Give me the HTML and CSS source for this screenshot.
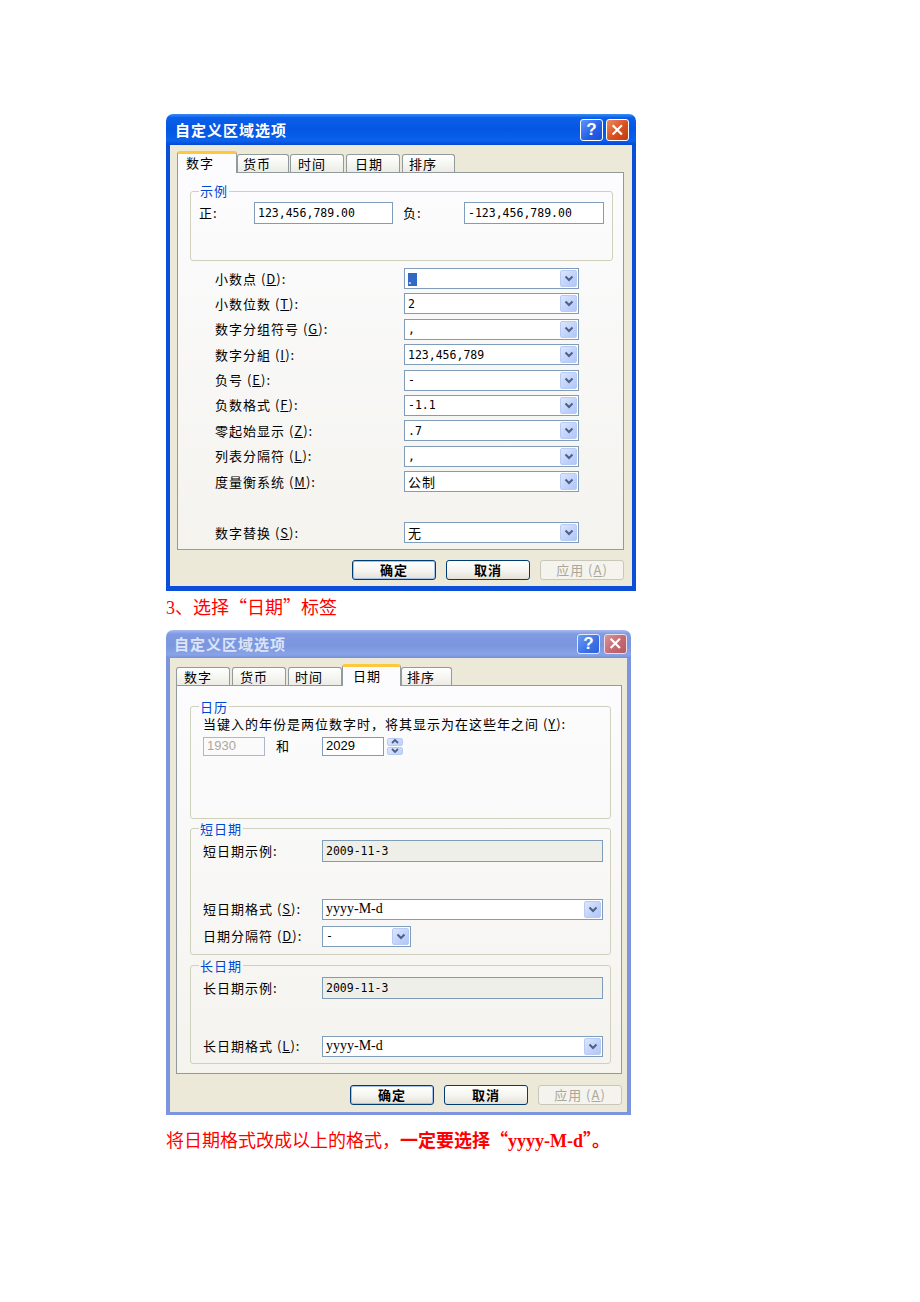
FILE: index.html
```html
<!DOCTYPE html>
<html lang="zh-CN">
<head>
<meta charset="utf-8">
<title>自定义区域选项</title>
<link rel="stylesheet" href="styles.css">
</head>
<body>
<div class="page">

  <section class="dlg dlg1">
    <header class="title">
      <span class="title-text">自定义区域选项</span>
      <div class="tbtns">
        <span class="tb help">?</span>
        <span class="tb close"><svg viewBox="0 0 23 21" width="23" height="21"><path d="M7 5.5 L15.5 14 M15.5 5.5 L7 14" stroke="#fff" stroke-width="2.4" stroke-linecap="square" fill="none"/></svg></span>
      </div>
    </header>
    <div class="dbody">
      <div class="tabs">
        <span class="tab active w60 pl8">数字</span>
        <span class="tab w52 pl5">货币</span>
        <span class="tab w54 ml1 pl7">时间</span>
        <span class="tab w54 ml2 pl8">日期</span>
        <span class="tab w53 ml2 pl6">排序</span>
      </div>
      <div class="panel p1">
        <fieldset class="group g-sample">
          <legend>示例</legend>
          <div class="sample">
            <span class="slbl w55">正:</span>
            <span class="field w139 num">123,456,789.00</span>
            <span class="slbl w61 ml10">负:</span>
            <span class="field w140 num">-123,456,789.00</span>
          </div>
        </fieldset>
        <div class="rows">
          <div class="row"><span class="lbl">小数点 (<u>D</u>):</span><div class="combo"><span class="val"><span class="sel">.</span></span><span class="dd"><svg viewBox="0 0 10 7" width="10" height="7"><path d="M1.5 1.5 L5 5 L8.5 1.5" stroke="#4D6185" stroke-width="2" fill="none"/></svg></span></div></div>
          <div class="row"><span class="lbl">小数位数 (<u>T</u>):</span><div class="combo"><span class="val num">2</span><span class="dd"><svg viewBox="0 0 10 7" width="10" height="7"><path d="M1.5 1.5 L5 5 L8.5 1.5" stroke="#4D6185" stroke-width="2" fill="none"/></svg></span></div></div>
          <div class="row"><span class="lbl">数字分组符号 (<u>G</u>):</span><div class="combo"><span class="val num">,</span><span class="dd"><svg viewBox="0 0 10 7" width="10" height="7"><path d="M1.5 1.5 L5 5 L8.5 1.5" stroke="#4D6185" stroke-width="2" fill="none"/></svg></span></div></div>
          <div class="row"><span class="lbl">数字分組 (<u>I</u>):</span><div class="combo"><span class="val num">123,456,789</span><span class="dd"><svg viewBox="0 0 10 7" width="10" height="7"><path d="M1.5 1.5 L5 5 L8.5 1.5" stroke="#4D6185" stroke-width="2" fill="none"/></svg></span></div></div>
          <div class="row"><span class="lbl">负号 (<u>E</u>):</span><div class="combo"><span class="val num">-</span><span class="dd"><svg viewBox="0 0 10 7" width="10" height="7"><path d="M1.5 1.5 L5 5 L8.5 1.5" stroke="#4D6185" stroke-width="2" fill="none"/></svg></span></div></div>
          <div class="row"><span class="lbl">负数格式 (<u>F</u>):</span><div class="combo"><span class="val num">-1.1</span><span class="dd"><svg viewBox="0 0 10 7" width="10" height="7"><path d="M1.5 1.5 L5 5 L8.5 1.5" stroke="#4D6185" stroke-width="2" fill="none"/></svg></span></div></div>
          <div class="row"><span class="lbl">零起始显示 (<u>Z</u>):</span><div class="combo"><span class="val num">.7</span><span class="dd"><svg viewBox="0 0 10 7" width="10" height="7"><path d="M1.5 1.5 L5 5 L8.5 1.5" stroke="#4D6185" stroke-width="2" fill="none"/></svg></span></div></div>
          <div class="row"><span class="lbl">列表分隔符 (<u>L</u>):</span><div class="combo"><span class="val num">,</span><span class="dd"><svg viewBox="0 0 10 7" width="10" height="7"><path d="M1.5 1.5 L5 5 L8.5 1.5" stroke="#4D6185" stroke-width="2" fill="none"/></svg></span></div></div>
          <div class="row"><span class="lbl">度量衡系统 (<u>M</u>):</span><div class="combo"><span class="val">公制</span><span class="dd"><svg viewBox="0 0 10 7" width="10" height="7"><path d="M1.5 1.5 L5 5 L8.5 1.5" stroke="#4D6185" stroke-width="2" fill="none"/></svg></span></div></div>
          <div class="row row-gap"><span class="lbl">数字替换 (<u>S</u>):</span><div class="combo"><span class="val">无</span><span class="dd"><svg viewBox="0 0 10 7" width="10" height="7"><path d="M1.5 1.5 L5 5 L8.5 1.5" stroke="#4D6185" stroke-width="2" fill="none"/></svg></span></div></div>
        </div>
      </div>
      <div class="btns">
        <span class="btn default">确定</span>
        <span class="btn">取消</span>
        <span class="btn disabled">应用 (<u>A</u>)</span>
      </div>
    </div>
  </section>

  <p class="note note1"><span class="latin">3</span>、选择“日期”标签</p>

  <section class="dlg dlg2">
    <header class="title">
      <span class="title-text">自定义区域选项</span>
      <div class="tbtns">
        <span class="tb help">?</span>
        <span class="tb close"><svg viewBox="0 0 23 20" width="23" height="20"><path d="M7 5 L15.5 13.5 M15.5 5 L7 13.5" stroke="#fff" stroke-width="2.4" stroke-linecap="square" fill="none"/></svg></span>
      </div>
    </header>
    <div class="dbody">
      <div class="tabs">
        <span class="tab w54 pl7">数字</span>
        <span class="tab w54 ml2 pl7">货币</span>
        <span class="tab w54 ml2 pl6">时间</span>
        <span class="tab active w59 pl10">日期</span>
        <span class="tab w51 pl5">排序</span>
      </div>
      <div class="panel p2">
        <fieldset class="group g-cal">
          <legend>日历</legend>
          <div class="gcontent">
            <div class="line">当键入的年份是两位数字时，将其显示为在这些年之间 (<u>Y</u>):</div>
            <div class="yearrow">
              <span class="field yf disabled">1930</span>
              <span class="and">和</span>
              <span class="field yf">2029</span>
              <span class="spin">
                <span class="sb"><svg viewBox="0 0 8 5" width="8" height="5"><path d="M1 4 L4 1 L7 4" stroke="#4D6185" stroke-width="1.8" fill="none"/></svg></span>
                <span class="sb"><svg viewBox="0 0 8 5" width="8" height="5"><path d="M1 1 L4 4 L7 1" stroke="#4D6185" stroke-width="1.8" fill="none"/></svg></span>
              </span>
            </div>
          </div>
        </fieldset>
        <fieldset class="group g-short">
          <legend>短日期</legend>
          <div class="gcontent">
            <div class="drow"><span class="dlbl">短日期示例:</span><span class="field ro num grow">2009-11-3</span></div>
            <div class="drow gap37"><span class="dlbl">短日期格式 (<u>S</u>):</span><div class="combo grow"><span class="val serif">yyyy-M-d</span><span class="dd"><svg viewBox="0 0 10 7" width="10" height="7"><path d="M1.5 1.5 L5 5 L8.5 1.5" stroke="#4D6185" stroke-width="2" fill="none"/></svg></span></div></div>
            <div class="drow gap6"><span class="dlbl">日期分隔符 (<u>D</u>):</span><div class="combo small"><span class="val num">-</span><span class="dd"><svg viewBox="0 0 10 7" width="10" height="7"><path d="M1.5 1.5 L5 5 L8.5 1.5" stroke="#4D6185" stroke-width="2" fill="none"/></svg></span></div></div>
          </div>
        </fieldset>
        <fieldset class="group g-long">
          <legend>长日期</legend>
          <div class="gcontent">
            <div class="drow"><span class="dlbl">长日期示例:</span><span class="field ro num grow">2009-11-3</span></div>
            <div class="drow gap37"><span class="dlbl">长日期格式 (<u>L</u>):</span><div class="combo grow"><span class="val serif">yyyy-M-d</span><span class="dd"><svg viewBox="0 0 10 7" width="10" height="7"><path d="M1.5 1.5 L5 5 L8.5 1.5" stroke="#4D6185" stroke-width="2" fill="none"/></svg></span></div></div>
          </div>
        </fieldset>
      </div>
      <div class="btns">
        <span class="btn default">确定</span>
        <span class="btn">取消</span>
        <span class="btn disabled">应用 (<u>A</u>)</span>
      </div>
    </div>
  </section>

  <p class="note note2">将日期格式改成以上的格式，<b>一定要选择“<span class="latin">yyyy-M-d</span>”。</b></p>

</div>
</body>
</html>
```

FILE: styles.css
```css
* { box-sizing: border-box; }

body {
  margin: 0;
  background: #ffffff;
  font-family: "Noto Sans CJK SC", sans-serif;
}

.page {
  padding: 114px 0 0 166px;
}

/* ---------- dialog frame ---------- */
.dlg {
  display: flex;
  flex-direction: column;
  font-size: 13px;
  line-height: 16px;
  letter-spacing: 1px;
  color: #000;
}
.dlg1 { width: 470px; }
.dlg2 { width: 465px; }

.title {
  display: flex;
  align-items: center;
  justify-content: space-between;
  border-radius: 7px 7px 0 0;
}
.dlg1 .title {
  height: 31px;
  padding: 1px 7px 0 9px;
  background: linear-gradient(#3D8BF7 0%, #0A5FE8 12%, #0556E3 50%, #0A62EC 86%, #0646D2 100%);
}
.dlg2 .title {
  height: 28px;
  padding: 0 4px 0 8px;
  background: linear-gradient(#A9BCF0 0%, #809BE2 14%, #7B96DF 55%, #89A3E6 88%, #7590DA 100%);
}
.title-text {
  font-size: 15px;
  font-weight: bold;
  letter-spacing: 1px;
}
.dlg1 .title-text { color: #ffffff; }
.dlg2 .title-text { color: #DCE4F8; }

.tbtns {
  display: flex;
  align-items: center;
}
.dlg1 .tbtns { gap: 3px; }
.dlg2 .tbtns { gap: 4px; }

.tb {
  display: flex;
  align-items: center;
  justify-content: center;
  width: 23px;
  border: 1px solid #ffffff;
  border-radius: 3px;
  color: #fff;
  font-family: "Liberation Sans", sans-serif;
  font-weight: bold;
  font-size: 17px;
  letter-spacing: 0;
}
.dlg1 .tb { height: 22px; }
.dlg2 .tb { height: 20px; }
.dlg1 .help { background: linear-gradient(135deg, #5D95FA, #245EE6 60%, #1A4ED8); }
.dlg1 .close { background: linear-gradient(135deg, #EE8A63, #D9501F 55%, #C2380E); }
.dlg2 .help { background: linear-gradient(135deg, #6C9BF4, #3C72E6 60%, #2F60D8); border-color: #E2E9FA; }
.dlg2 .close { background: linear-gradient(135deg, #D7949A, #C46A72 55%, #B35A62); border-color: #EBDDE2; }
.tb svg { display: block; }

.dbody {
  display: flex;
  flex-direction: column;
  background: #ECE9D8;
  border-style: solid;
}
.dlg1 .dbody {
  border-width: 0 4px 5px;
  border-color: #0B4FD9;
  padding: 6px 8px 6px 7px;
}
.dlg2 .dbody {
  border-width: 0 4px 3px;
  border-color: #7C95DE;
  padding: 6px 5px 7px 6px;
}

/* ---------- tabs ---------- */
.tabs {
  display: flex;
  align-items: flex-end;
  height: 21px;
}
.tab {
  height: 18px;
  border: 1px solid #919B9C;
  border-bottom: none;
  border-radius: 3px 3px 0 0;
  background: linear-gradient(#FFFFFF, #F4F4F0 60%, #ECEBE5);
  line-height: 17px;
  white-space: nowrap;
}
.tab.active {
  height: 22px;
  margin-bottom: -1px;
  position: relative;
  border-top: 3px solid #FFC83C;
  background: #FCFCFE;
  line-height: 18px;
}
.w51 { width: 51px; }
.w52 { width: 52px; }
.w53 { width: 53px; }
.w54 { width: 54px; }
.w59 { width: 59px; }
.w60 { width: 60px; }
.ml1 { margin-left: 1px; }
.ml2 { margin-left: 2px; }
.pl5 { padding-left: 5px; }
.pl6 { padding-left: 6px; }
.pl7 { padding-left: 7px; }
.pl8 { padding-left: 8px; }
.pl10 { padding-left: 10px; }

/* ---------- panel ---------- */
.panel {
  display: flex;
  flex-direction: column;
  border: 1px solid #919B9C;
  background: linear-gradient(#FCFCFE, #F4F3EE);
}
.p1 { padding-bottom: 5.7px; }
.p2 { padding-bottom: 9px; }

.group {
  margin: 0;
  padding: 0;
  min-width: 0;
  border: 1px solid #D0D0BF;
  border-radius: 3px;
}
.group legend {
  color: #0046D5;
  line-height: 14px;
  padding: 0 1px;
  white-space: nowrap;
}
.g-sample { margin: 11px 10px 0 12px; }
.g-sample legend { margin-left: 8px; }
.g-cal { margin: 14px 10px 0 13px; }
.g-short { margin: 3px 10px 0 13px; }
.g-long { margin: 4px 10px 0 13px; }
.g-cal legend, .g-short legend, .g-long legend { margin-left: 8px; }

/* sample row */
.sample {
  display: flex;
  align-items: center;
  padding: 4px 0 36px 8px;
}
.slbl { flex: none; }
.w55 { width: 55px; }
.w61 { width: 61px; }
.ml10 { margin-left: 10px; }
.w139 { width: 139px; }
.w140 { width: 140px; }

.field {
  flex: none;
  display: flex;
  align-items: center;
  height: 22px;
  padding-left: 3px;
  border: 1px solid #7F9DB9;
  background: #ffffff;
  white-space: nowrap;
}
.num {
  font-family: "DejaVu Sans Mono", monospace;
  font-size: 11.5px;
  letter-spacing: 0;
}
.serif {
  font-family: "Liberation Serif", serif;
  font-size: 14px;
  letter-spacing: 0;
}

/* rows of combos */
.rows {
  display: flex;
  flex-direction: column;
  gap: 4.4px;
  margin-top: 7px;
  padding-left: 37px;
}
.row {
  display: flex;
  align-items: center;
  height: 21px;
}
.row-gap { margin-top: 25.7px; }
.lbl {
  flex: none;
  width: 189px;
  white-space: nowrap;
}

.combo {
  flex: none;
  display: flex;
  align-items: center;
  width: 175px;
  height: 21px;
  border: 1px solid #7F9DB9;
  background: #ffffff;
}
.combo .val {
  flex: 1;
  padding-left: 3px;
  white-space: nowrap;
}
.sel {
  display: inline-block;
  width: 9px;
  height: 13px;
  line-height: 12px;
  background: #316AC5;
  color: #fff;
  vertical-align: middle;
}
.dd {
  flex: none;
  display: flex;
  align-items: center;
  justify-content: center;
  width: 17px;
  align-self: stretch;
  margin: 1px;
  border: 1px solid #B9CBF5;
  border-radius: 2px;
  background: linear-gradient(135deg, #DCE6FD, #C2D3FB 55%, #B2C7F8);
}
.dd svg { display: block; }

/* dialog 2 groups */
.gcontent {
  display: flex;
  flex-direction: column;
}
.g-cal .gcontent { padding: 2px 0 62px 12px; }
.g-short .gcontent { padding: 4px 7px 7px 12px; }
.g-long .gcontent { padding: 4px 7px 6px 12px; }

.line { white-space: nowrap; }
.yearrow {
  display: flex;
  align-items: center;
  margin-top: 5px;
}
.yf {
  width: 62px;
  height: 19px;
  font-family: "Liberation Sans", sans-serif;
  font-size: 13px;
  letter-spacing: 0;
}
.yf.disabled {
  color: #ACA899;
  border-color: #A9B8CA;
  background: transparent;
}
.and {
  width: 46px;
  margin-left: 11px;
}
.spin {
  display: flex;
  flex-direction: column;
  gap: 1px;
  margin-left: 3px;
  width: 16px;
}
.sb {
  display: flex;
  align-items: center;
  justify-content: center;
  height: 8px;
  border-radius: 2px;
  background: linear-gradient(135deg, #DCE6FD, #BDD0FA);
  border: 1px solid #B9CBF5;
}
.sb svg { display: block; }

.drow {
  display: flex;
  align-items: center;
}
.dlbl {
  flex: none;
  width: 119px;
  white-space: nowrap;
}
.grow { flex: 1; width: auto; }
.field.ro { background: #EFEFEA; }
.gap37 { margin-top: 37px; }
.gap6 { margin-top: 6px; }
.combo.small { width: 89px; }

/* ---------- buttons ---------- */
.btns {
  display: flex;
  justify-content: flex-end;
  gap: 10px;
}
.dlg1 .btns { margin-top: 10px; }
.dlg2 .btns { margin-top: 11px; }
.btn {
  display: flex;
  align-items: center;
  justify-content: center;
  width: 84px;
  height: 20px;
  border: 1px solid #003C74;
  border-radius: 3px;
  background: linear-gradient(#FFFFFF, #F5F4EF 55%, #E3E0D6);
  font-weight: bold;
}
.btn.default { box-shadow: inset 0 0 0 1px #A6C0EE; }
.btn.disabled {
  border-color: #C9C7BA;
  background: #F4F3EE;
  color: #ACA899;
  font-weight: normal;
}

/* ---------- notes ---------- */
.note {
  margin: 0;
  color: #FF0000;
  font-size: 18px;
  line-height: 24px;
  font-family: "Noto Sans CJK SC", sans-serif;
}
.note1 { margin: 3px 0 10px; }
.note2 { margin-top: 12px; }
.note .latin { font-family: "Liberation Serif", serif; }
.note b { font-weight: bold; }
```
